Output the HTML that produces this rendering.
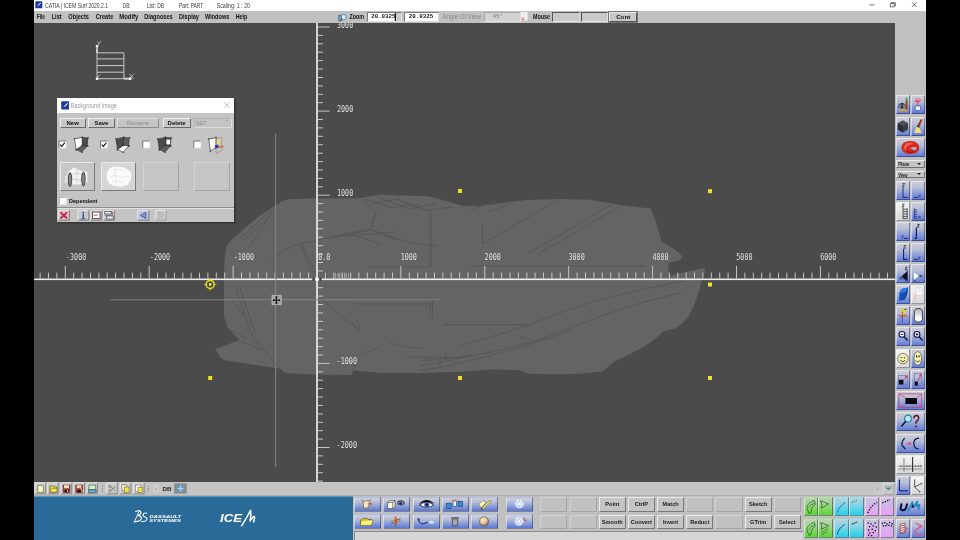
<!DOCTYPE html><html><head><meta charset="utf-8"><title>CATIA | ICEM Surf</title><style>
html,body{margin:0;padding:0;background:#000;}
body{width:960px;height:540px;overflow:hidden;position:relative;font-family:"Liberation Sans",sans-serif;}
.a{position:absolute;}
svg text{font-family:"Liberation Sans",sans-serif;}
.mono text{font-family:"DejaVu Sans Mono","Liberation Mono",monospace;}
#win{will-change:transform;position:absolute;left:34px;top:0;width:892px;height:540px;background:#c0c0c0;overflow:hidden;}
#title{position:absolute;left:0;top:0;width:892px;height:11px;background:#fff;}
#title span{position:absolute;top:1.5px;font-size:6px;line-height:8px;color:#222;white-space:nowrap;}
#menu{position:absolute;left:0;top:11px;width:892px;height:12px;background:#c1c1c1;}
#menu span.m{position:absolute;top:2px;font-size:6.4px;line-height:8px;font-weight:bold;color:#111;white-space:nowrap;}
#vp{position:absolute;left:0;top:23px;width:861px;height:459px;background:#4b4b4b;overflow:hidden;}
#rt{position:absolute;left:861px;top:23px;width:31px;height:517px;background:#c0c0c0;}
.tb{position:absolute;box-sizing:border-box;border-top:1px solid rgba(255,255,255,0.5);border-left:1px solid rgba(255,255,255,0.5);border-bottom:1px solid rgba(20,20,60,0.42);border-right:1px solid rgba(20,20,60,0.42);background:linear-gradient(#cfcfd6 0%,#b9bfd6 35%,#7f93d6 75%,#5d79d3 100%);background-origin:border-box;overflow:hidden;}
.tb.lt{background:linear-gradient(#f4f4f4,#d8d8d8);}
.tb svg{position:absolute;left:0;top:0;}
.dd{position:absolute;box-sizing:border-box;background:#c4c4c4;border-top:1px solid #ececec;border-left:1px solid #ececec;border-bottom:1px solid #707070;border-right:1px solid #707070;}
.dd span{position:absolute;left:1.5px;top:-0.6px;font-size:5.4px;line-height:6px;font-weight:bold;color:#222;}
.dd i{position:absolute;right:2.2px;top:1.6px;width:0;height:0;border-left:2px solid transparent;border-right:2px solid transparent;border-top:2.6px solid #222;}

.tb.bb{background:linear-gradient(#d0d0d8 0%,#b8c0d8 30%,#7c92d6 75%,#5a78d4 100%);}
.tb.kg{background:linear-gradient(#bcd2b4 0%,#9ed48a 40%,#5cd62c 100%);}
.tb.kc{background:linear-gradient(#b4d4dc 0%,#84d4e4 40%,#22d2ea 100%);}
.tb.kp{background:linear-gradient(#c8c4de 0%,#d4b4e8 45%,#eaa0f2 100%);}
.gb{position:absolute;box-sizing:border-box;background:#c4c4c4;border-top:1px solid #ececec;border-left:1px solid #ececec;border-bottom:1px solid #787878;border-right:1px solid #787878;text-align:center;}
.gb.e{background:#c1c1c1;border-top-color:#d2d2d2;border-left-color:#d2d2d2;border-bottom-color:#a6a6a6;border-right-color:#a6a6a6;}
.gb span{display:block;font-size:5.6px;line-height:12px;font-weight:bold;color:#1a1a1a;white-space:nowrap;}

#dlg{position:absolute;background:#c4c4c4;box-shadow:1px 1px 2px rgba(0,0,0,0.45);}
#dlg .dt{position:absolute;left:0;top:0;width:100%;height:14.4px;background:#fff;}
#dlg .dt span{position:absolute;left:14px;top:3.2px;font-size:6px;line-height:8px;color:#8c8c98;white-space:nowrap;}
.db{position:absolute;box-sizing:border-box;background:#c8c8c8;border-top:1px solid #f0f0f0;border-left:1px solid #f0f0f0;border-bottom:1px solid #6a6a6a;border-right:1px solid #6a6a6a;}
.db span{display:block;text-align:center;font-size:6px;line-height:8px;font-weight:bold;color:#111;white-space:nowrap;}
.db.dis span{color:#8e8e8e;font-weight:normal;}
.db.dis{border-bottom-color:#8a8a8a;border-right-color:#8a8a8a;border-top-color:#dedede;border-left-color:#dedede;background:#c4c4c4;}
.db.sel{border-top-color:#b4b4b4;border-left-color:#b4b4b4;border-bottom-color:#dcdcdc;border-right-color:#dcdcdc;}
.db.sel i{position:absolute;right:2.4px;top:1.6px;width:0;height:0;border-left:1.6px solid transparent;border-right:1.6px solid transparent;border-top:2.4px solid #9a9a9a;}
.th{position:absolute;box-sizing:border-box;background:#c6c6c6;border-top:1px solid #e8e8e8;border-left:1px solid #e8e8e8;border-bottom:1px solid #7a7a7a;border-right:1px solid #7a7a7a;overflow:hidden;}
.th.lt2{background:#d6d6d6;}
.th.em{background:#c5c5c5;border-top-color:#d4d4d4;border-left-color:#d4d4d4;border-bottom-color:#a4a4a4;border-right-color:#a4a4a4;}
.th svg{position:absolute;left:0;top:0;}
.dep{position:absolute;font-size:6px;line-height:8px;font-weight:bold;color:#111;white-space:nowrap;}

.inp{position:absolute;top:1.2px;height:9.4px;box-sizing:border-box;background:#fff;border:1px solid #7a7a7a;border-right-color:#e0e0e0;border-bottom-color:#e0e0e0;overflow:hidden;}
.inp span{position:absolute;left:3.6px;top:0.2px;font-family:"Liberation Mono",monospace;font-size:5.8px;line-height:7px;font-weight:bold;color:#111;white-space:nowrap;}
.inp u{position:absolute;left:27px;top:0;width:0.8px;height:8px;background:#111;}
.inp.g{background:#d2d2d2;border-color:#a8a8a8;border-right-color:#e4e4e4;border-bottom-color:#e4e4e4;}
.inp.g2{background:#c9c9c9;border-color:#555;border-right-color:#e4e4e4;border-bottom-color:#e4e4e4;}
.inp.bt{background:#c8c8c8;border-color:#e8e8e8;border-right-color:#555;border-bottom-color:#555;outline:0.5px solid #777;}
</style></head><body>
<div id="win">
<div id="title">
<svg class="a" style="left:1.3px;top:1.3px" width="7.6" height="7.6" viewBox="0 0 9 9"><rect x="0.3" y="0.3" width="8.4" height="8.4" rx="1" fill="#1c3a9a"/><path d="M1.5 7.5 C3 6 4 3 7.5 1.5 C6.5 3.5 5 5 3 6 Z" fill="#fff"/></svg>
<svg class="a" style="left:0;top:0" width="892" height="11" viewBox="34 0 892 11" font-family="'Liberation Sans',sans-serif">
<text x="45" y="7.9" font-size="6.4" font-weight="normal" fill="#3c3c3c" textLength="63.2" lengthAdjust="spacingAndGlyphs">CATIA | ICEM Surf 2020.2.1</text>
<text x="122.7" y="7.9" font-size="6.4" font-weight="normal" fill="#3c3c3c" textLength="8.0" lengthAdjust="spacingAndGlyphs">DB:</text>
<text x="146.7" y="7.9" font-size="6.4" font-weight="normal" fill="#3c3c3c" textLength="17.3" lengthAdjust="spacingAndGlyphs">List: DB</text>
<text x="179" y="7.9" font-size="6.4" font-weight="normal" fill="#3c3c3c" textLength="24.3" lengthAdjust="spacingAndGlyphs">Part: PART</text>
<text x="216.7" y="7.9" font-size="6.4" font-weight="normal" fill="#3c3c3c" textLength="33.3" lengthAdjust="spacingAndGlyphs">Scaling: 1 : 20</text>
</svg>
<svg class="a" style="left:820px;top:0" width="72" height="11" viewBox="0 0 72 11"><g stroke="#333" stroke-width="0.7" fill="none"><path d="M15.6 4.9h4.7"/><path d="M36.3 3.6h3.9v3.3h-3.9z M37.4 3.6v-1h3.9v3.3h-1.1"/><path d="M58.1 2.5l4.5 4.5M62.6 2.5l-4.5 4.5"/></g></svg>
</div>
<div id="menu">
<svg class="a" style="left:0;top:0" width="892" height="12" viewBox="34 11 892 12" font-family="'Liberation Sans',sans-serif">
<text x="36.7" y="18.7" font-size="6.4" font-weight="bold" fill="#111" textLength="8.3" lengthAdjust="spacingAndGlyphs">File</text>
<text x="51.7" y="18.7" font-size="6.4" font-weight="bold" fill="#111" textLength="10.0" lengthAdjust="spacingAndGlyphs">List</text>
<text x="68.3" y="18.7" font-size="6.4" font-weight="bold" fill="#111" textLength="20.7" lengthAdjust="spacingAndGlyphs">Objects</text>
<text x="95.7" y="18.7" font-size="6.4" font-weight="bold" fill="#111" textLength="17.6" lengthAdjust="spacingAndGlyphs">Create</text>
<text x="119.3" y="18.7" font-size="6.4" font-weight="bold" fill="#111" textLength="19.0" lengthAdjust="spacingAndGlyphs">Modify</text>
<text x="144.3" y="18.7" font-size="6.4" font-weight="bold" fill="#111" textLength="28.4" lengthAdjust="spacingAndGlyphs">Diagnoses</text>
<text x="179" y="18.7" font-size="6.4" font-weight="bold" fill="#111" textLength="20.0" lengthAdjust="spacingAndGlyphs">Display</text>
<text x="205" y="18.7" font-size="6.4" font-weight="bold" fill="#111" textLength="24.3" lengthAdjust="spacingAndGlyphs">Windows</text>
<text x="235.7" y="18.7" font-size="6.4" font-weight="bold" fill="#111" textLength="11.6" lengthAdjust="spacingAndGlyphs">Help</text>
<text x="349.4" y="18.7" font-size="6.4" font-weight="bold" fill="#111" textLength="14.6" lengthAdjust="spacingAndGlyphs">Zoom</text>
<text x="533" y="18.7" font-size="6.4" font-weight="bold" fill="#111" textLength="17.0" lengthAdjust="spacingAndGlyphs">Mouse</text>
<text x="442.6" y="18.7" font-size="6.4" font-weight="normal" fill="#8a8a8a" textLength="38.2" lengthAdjust="spacingAndGlyphs">Angle Of View</text>
</svg>
<svg class="a" style="left:304px;top:1.5px" width="9" height="9" viewBox="0 0 9 9"><circle cx="5.6" cy="4" r="2.6" fill="#dfeef8" stroke="#4a7a9a" stroke-width="0.8"/><rect x="0.8" y="2.2" width="2.4" height="5.6" fill="#6aa0c8" stroke="#2a4a6a" stroke-width="0.5"/><path d="M4 6.2L2.6 8.4" stroke="#444" stroke-width="0.9"/></svg>
<div class="inp" style="left:332.6px;width:35px"><b style="position:absolute;right:0;top:0;width:6.2px;height:100%;background:#cbcbcb"></b><span>20.9325</span><u></u></div>
<div class="inp" style="left:370.2px;width:34.4px"><span>20.9325</span></div>
<div class="inp g" style="left:449.6px;width:37px"><span style="color:#8e8e8e;left:8px">45&deg;</span></div>
<svg class="a" style="left:486.6px;top:1.2px" width="7" height="9" viewBox="0 0 7 9"><rect x="0" y="0" width="6.6" height="8.6" fill="#f0f0f0"/><path d="M1.2 5.4v2.4h1.6V5.4" stroke="#d03020" stroke-width="0.6" fill="none"/></svg>
<div class="inp g2" style="left:518px;width:27.8px"></div>
<div class="inp g2" style="left:546.8px;width:27.4px"></div>
<div class="inp bt" style="left:575.2px;width:28px"><span style="left:0;width:100%;text-align:center;font-family:'Liberation Sans',sans-serif;font-weight:bold;font-size:6.2px">Cont</span></div>
</div>
<div id="vp"><svg class="a" style="left:0;top:0" width="861" height="459" viewBox="34 23 861 459" font-family="'Liberation Mono',monospace">
<polygon fill="#646464" points="224,279 224.4,261.4 226,247.2 230.5,241 243.8,228.9 261,214.6 269.2,209.5 282.5,200.8 289.6,199.3 316,198.3 354.8,198.3 362,197.8 380,194.6 400.4,195.5 426.8,196 441,199.5 461.5,205.6 477.7,206.2 502.2,203 526.6,200.1 560,199 590.5,199.8 621,205.3 650.6,208.6 655.2,219.5 661.8,242 674,249 681.2,255.2 682.2,258.2 679,260.3 669,262.9 668,267.4 670,275.5 705.6,267.4 702.5,279.6 701.5,281 699.5,290.2 694.4,304.4 688.3,316.7 682.2,323.8 676,327.9 661.8,332 659.8,335 649.6,343.1 637.4,350.3 623.1,357.4 613,362.5 602.8,371.6 580.4,373.7 560,374.3 528.6,373.7 518.5,370.3 494,369.6 461.4,371.7 420.7,372.9 380,372.9 353.7,370.4 351.7,375.1 316,374.5 285.5,373.1 279.4,368.4 250.9,364.3 224.4,360.3 220.4,357.2 215.3,349 239.7,339.9 227.5,327.7 224,316.5"/>
<g id="sketch" fill="none" stroke="#545454" stroke-width="0.85"><path d="M240.6 238L273 208.5M244 240L275 211M248.8 247.7L270.4 215M270 261Q284 248 300 243.7L316.5 241M300 245L313.8 274.8M302 244.6L316 273"/>
<path d="M362.5 199L376 212.5L370.6 228.8L319 239.6M376 212.5L372 226M330 238L372 230L410 243L436 246M345 236L395 232M372 230L396 240M352 234L380 244"/>
<path d="M366 199.4L392 207.6L418 204.4M380 198L410 209L436 203M398 200L426 210.6L452 207M372 203L400 199"/>
<path d="M430 210V266.7M368 266.7H430M431 211V266M428.4 264l1.6 2.6 1.6-2.6" stroke-width="0.6"/>
<path d="M482.5 244L557.5 200M528 253.4L610.6 205M538.75 253.4L620 206.6M482.5 223.8V244M470 266H645M462 207L480 203M470 210L496 201M488 212L512 203"/>
<path d="M682.5 281Q640 289 595 301Q560 312 529 324.7Q490 338 460.6 345M682.5 292.5Q640 302 607.5 313.8Q570 328 538.8 340Q510 348 488.8 352.8Q450 359 420 360.6"/>
<path d="M443.4 324.7H526M420 370.6Q452 366 482.5 357.5Q530 346 573 329.4M420 299.7H432.5V318.4M420 366Q445 362 470 356M446 352v8M488 348v5M520 338.6l4-1.6 8 3.4"/>
<path d="M319 294.4Q328 306 341 316Q352 324 360 331M352 322l8 9-2-10M235 286L251.5 335L278.6 367.5M240 288L255 333M232 300L246 318M354.5 303.9H430.4V318.8"/>
<path d="M362.6 354L378.9 347.2M389.7 343Q405 348 422 348.6M406 356.7L460 358M440 360v8M356 364l-4 8M240.6 341L262 350M227 328L246 338"/></g>
<g fill="#ececec">
<rect x="34" y="278.50" width="861" height="1.6"/>
<rect x="316.15" y="23" width="1.7" height="459"/>
</g>
<g stroke="#d8d8d8" stroke-width="0.85">
<path d="M40.1 278.5v-5.9M48.5 278.5v-5.9M56.9 278.5v-5.9M65.3 278.5v-12.6M73.7 278.5v-5.9M82.1 278.5v-5.9M90.5 278.5v-5.9M98.9 278.5v-5.9M107.2 278.5v-5.9M115.6 278.5v-5.9M124.0 278.5v-5.9M132.4 278.5v-5.9M140.8 278.5v-5.9M149.2 278.5v-12.6M157.6 278.5v-5.9M166.0 278.5v-5.9M174.4 278.5v-5.9M182.8 278.5v-5.9M191.1 278.5v-5.9M199.5 278.5v-5.9M207.9 278.5v-5.9M216.3 278.5v-5.9M224.7 278.5v-5.9M233.1 278.5v-12.6M241.5 278.5v-5.9M249.9 278.5v-5.9M258.3 278.5v-5.9M266.7 278.5v-5.9M275.1 278.5v-5.9M283.4 278.5v-5.9M291.8 278.5v-5.9M300.2 278.5v-5.9M308.6 278.5v-5.9M325.4 278.5v-5.9M333.8 278.5v-5.9M342.2 278.5v-5.9M350.6 278.5v-5.9M358.9 278.5v-5.9M367.3 278.5v-5.9M375.7 278.5v-5.9M384.1 278.5v-5.9M392.5 278.5v-5.9M400.9 278.5v-12.6M409.3 278.5v-5.9M417.7 278.5v-5.9M426.1 278.5v-5.9M434.5 278.5v-5.9M442.9 278.5v-5.9M451.2 278.5v-5.9M459.6 278.5v-5.9M468.0 278.5v-5.9M476.4 278.5v-5.9M484.8 278.5v-12.6M493.2 278.5v-5.9M501.6 278.5v-5.9M510.0 278.5v-5.9M518.4 278.5v-5.9M526.8 278.5v-5.9M535.1 278.5v-5.9M543.5 278.5v-5.9M551.9 278.5v-5.9M560.3 278.5v-5.9M568.7 278.5v-12.6M577.1 278.5v-5.9M585.5 278.5v-5.9M593.9 278.5v-5.9M602.3 278.5v-5.9M610.7 278.5v-5.9M619.0 278.5v-5.9M627.4 278.5v-5.9M635.8 278.5v-5.9M644.2 278.5v-5.9M652.6 278.5v-12.6M661.0 278.5v-5.9M669.4 278.5v-5.9M677.8 278.5v-5.9M686.2 278.5v-5.9M694.5 278.5v-5.9M702.9 278.5v-5.9M711.3 278.5v-5.9M719.7 278.5v-5.9M728.1 278.5v-5.9M736.5 278.5v-12.6M744.9 278.5v-5.9M753.3 278.5v-5.9M761.7 278.5v-5.9M770.1 278.5v-5.9M778.5 278.5v-5.9M786.8 278.5v-5.9M795.2 278.5v-5.9M803.6 278.5v-5.9M812.0 278.5v-5.9M820.4 278.5v-12.6M828.8 278.5v-5.9M837.2 278.5v-5.9M845.6 278.5v-5.9M854.0 278.5v-5.9M862.4 278.5v-5.9M870.7 278.5v-5.9M879.1 278.5v-5.9M887.5 278.5v-5.9"/>
<path d="M317.8 481.1h5.2M317.8 472.7h5.2M317.8 464.3h5.2M317.8 455.9h5.2M317.8 447.5h11.8M317.8 439.1h5.2M317.8 430.7h5.2M317.8 422.3h5.2M317.8 413.9h5.2M317.8 405.4h5.2M317.8 397.0h5.2M317.8 388.6h5.2M317.8 380.2h5.2M317.8 371.8h5.2M317.8 363.4h11.8M317.8 355.0h5.2M317.8 346.6h5.2M317.8 338.2h5.2M317.8 329.8h5.2M317.8 321.4h5.2M317.8 312.9h5.2M317.8 304.5h5.2M317.8 296.1h5.2M317.8 287.7h5.2M317.8 270.9h5.2M317.8 262.5h5.2M317.8 254.1h5.2M317.8 245.7h5.2M317.8 237.2h5.2M317.8 228.8h5.2M317.8 220.4h5.2M317.8 212.0h5.2M317.8 203.6h5.2M317.8 195.2h11.8M317.8 186.8h5.2M317.8 178.4h5.2M317.8 170.0h5.2M317.8 161.6h5.2M317.8 153.2h5.2M317.8 144.7h5.2M317.8 136.3h5.2M317.8 127.9h5.2M317.8 119.5h5.2M317.8 111.1h11.8M317.8 102.7h5.2M317.8 94.3h5.2M317.8 85.9h5.2M317.8 77.5h5.2M317.8 69.1h5.2M317.8 60.6h5.2M317.8 52.2h5.2M317.8 43.8h5.2M317.8 35.4h5.2M317.8 27.0h11.8"/>
</g>
<g class="mono" fill="#e0e0e0" font-size="8.1">
<text x="65.9" y="260.0" textLength="20.4" lengthAdjust="spacingAndGlyphs">-3000</text>
<text x="149.8" y="260.0" textLength="20.4" lengthAdjust="spacingAndGlyphs">-2000</text>
<text x="233.7" y="260.0" textLength="20.4" lengthAdjust="spacingAndGlyphs">-1000</text>
<text x="400.7" y="260.0" textLength="16.2" lengthAdjust="spacingAndGlyphs">1000</text>
<text x="484.6" y="260.0" textLength="16.2" lengthAdjust="spacingAndGlyphs">2000</text>
<text x="568.5" y="260.0" textLength="16.2" lengthAdjust="spacingAndGlyphs">3000</text>
<text x="652.4" y="260.0" textLength="16.2" lengthAdjust="spacingAndGlyphs">4000</text>
<text x="736.3" y="260.0" textLength="16.2" lengthAdjust="spacingAndGlyphs">5000</text>
<text x="820.2" y="260.0" textLength="16.2" lengthAdjust="spacingAndGlyphs">6000</text>
<text x="318.2" y="260.0" textLength="12.1" lengthAdjust="spacingAndGlyphs">0.0</text>
<text x="337.0" y="27.5" textLength="16.2" lengthAdjust="spacingAndGlyphs">3000</text>
<text x="337.0" y="111.6" textLength="16.2" lengthAdjust="spacingAndGlyphs">2000</text>
<text x="337.0" y="195.7" textLength="16.2" lengthAdjust="spacingAndGlyphs">1000</text>
<text x="336.6" y="363.9" textLength="20.4" lengthAdjust="spacingAndGlyphs">-1000</text>
<text x="336.6" y="448.0" textLength="20.4" lengthAdjust="spacingAndGlyphs">-2000</text>
<text x="334" y="278.3" font-size="7" fill="#cfcfcf" textLength="16.4" lengthAdjust="spacingAndGlyphs">|0|0|</text>
</g>
<rect x="312.4" y="277.90000000000003" width="2.4" height="2.8" fill="#3c3c3c"/><rect x="319.2" y="277.90000000000003" width="2.4" height="2.8" fill="#3c3c3c"/><rect x="315.4" y="277.7" width="3.2" height="3.2" fill="#fff"/>
<g stroke="#d8d8d8" stroke-width="0.9" fill="none">
<path d="M97 46V78.7H130 M97 52.8H123.9V78.7 M97 58.9H123.9 M97 65.6H123.9 M97 72.2H123.9"/>
<path d="M97 48.6V52.8 M124 78.7H130" stroke-width="1.8"/>
<path d="M97.5 41.5l1.6 2.2 2-2.6 M99.1 43.7l-1.4 2" stroke-width="0.7"/>
<path d="M129.5 74l4 4.6 M133.7 74l-4.4 4.6" stroke-width="0.7"/>
<path d="M97.5 77.5l2.5-3" stroke-width="0.7"/>
</g>
<g fill="#fff"><rect x="95.8" y="45" width="2.4" height="2.4"/><rect x="95.8" y="77.5" width="2.4" height="2.4"/><rect x="129" y="77.5" width="2.4" height="2.4"/></g>
<g stroke="#848484" stroke-width="1"><path d="M275.7 133.4V467 M110.4 299.8H441"/></g>
<rect x="272" y="295.3" width="9.2" height="9.4" fill="#a2a2a2" stroke="#c2c2c2" stroke-width="0.7"/><path d="M276.4 296.6v7M273.2 300.2h6.4" stroke="#0a0a0a" stroke-width="1" fill="none"/><path d="M276.4 295.8l-1.3 1.7h2.6zM276.4 304.4l-1.3-1.7h2.6zM272.6 300.2l1.5-1.2v2.4zM280.4 300.2l-1.5-1.2v2.4z" fill="#0a0a0a"/>
<g stroke="#e6dc14" fill="none"><circle cx="210.2" cy="284.4" r="4" stroke-width="1.6"/><path d="M204 284.4h2M214.4 284.4h2M210.2 278.2v2M210.2 288.6v2" stroke-width="0.8"/></g><rect x="209" y="283.2" width="2.4" height="2.4" fill="#f4ee60"/>
<g fill="#f0e020">
<rect x="458" y="189" width="4" height="4"/>
<rect x="708" y="189.2" width="4" height="4"/>
<rect x="708" y="282.5" width="4" height="4"/>
<rect x="208.2" y="376" width="4" height="4"/>
<rect x="458" y="376" width="4" height="4"/>
<rect x="708" y="376" width="4" height="4"/>
</g>
</svg></div>
<div id="rt"><div class="tb " style="left:1.2px;top:72.0px;width:13.9px;height:19.0px"><svg width="11.9" height="17.0" viewBox="0 0 11.9 17.0"><path d="M1.2 10.8Q5 6.8 9 10.8Q5 13.6 1.2 10.8Z" fill="#fff" stroke="#111" stroke-width="0.7"/><circle cx="5" cy="10.6" r="1.6" fill="#234"/><path d="M1 9.6Q5 4.6 9.2 9.6Q5 6.8 1 9.6Z" fill="#111"/><rect x="8.6" y="5" width="2" height="9" fill="#9a4418"/><path d="M8.6 5.2l0.4-3.6h1.2l0.4 3.6z" fill="#3a9a30"/><rect x="1.2" y="13.6" width="9.4" height="1.6" fill="#d8b020"/></svg></div>
<div class="tb " style="left:16.3px;top:72.0px;width:13.3px;height:19.0px"><svg width="11.3" height="17.0" viewBox="0 0 11.3 17.0"><path d="M3.2 3.2Q5.8 0.8 8.6 3.2Q9.6 5.6 6.6 6.6L6.3 10H5.2L5 6.6Q2 5.8 3.2 3.2Z" fill="#e0607a"/><path d="M4 3.6Q5.8 2.4 7.8 3.8" stroke="#fff" stroke-width="0.6" fill="none"/><rect x="3.2" y="10" width="5.4" height="4.6" rx="0.8" fill="#f4f4f8" stroke="#2848a8" stroke-width="0.7"/></svg></div>
<div class="tb " style="left:1.2px;top:93.7px;width:13.9px;height:19.0px"><svg width="11.9" height="17.0" viewBox="0 0 11.9 17.0"><path d="M5.8 2.6L11 5.2V11.4L5.8 14.4L0.8 11.4V5.2Z" fill="#3a3d40"/><path d="M5.8 2.6L11 5.2L5.8 8L0.8 5.2Z" fill="#505458"/><path d="M5.8 8V14.4L0.8 11.4V5.2Z" fill="#2a2c2e"/></svg></div>
<div class="tb " style="left:16.3px;top:93.7px;width:13.3px;height:19.0px"><svg width="11.3" height="17.0" viewBox="0 0 11.3 17.0"><path d="M8.8 1.2L10.2 1.8L7.2 9.2L5 8.4Z" fill="#8a2a1c"/><path d="M9.4 1.4L10.2 1.8L7.6 8" stroke="#d85a3c" stroke-width="0.6" fill="none"/><path d="M4.8 8.2L7.4 9.4L9.6 15H2.2Z" fill="#f0e070"/><path d="M4.8 8.2L7.4 9.4" stroke="#222" stroke-width="0.9"/></svg></div>
<div class="tb " style="left:1.2px;top:115.2px;width:28.4px;height:19.0px"><svg width="26.4" height="17.0" viewBox="0 0 26.4 17.0"><path d="M4.4 8.5Q4.4 3.2 11 2.2Q18 1.2 21 5Q23.4 8 21.4 11.8Q18.6 15.4 12 15Q4.8 14.4 4.4 8.5Z" fill="#d62a20"/><path d="M7 8Q7.5 4.5 12 3.8Q15 3.4 16.5 5Q12 5 10 7.5Q8.5 9.5 9 12Q7 11 7 8Z" fill="#f0625a"/><path d="M13 9.5Q16 7 20 8.4Q19.5 10.5 17.5 11.4Q15 10 13 9.5Z" fill="#b8b0c8"/><path d="M9.5 12.5Q13 14.5 18 12.6" stroke="#8c1410" stroke-width="0.9" fill="none"/></svg></div>
<div class="tb " style="left:1.2px;top:158.0px;width:13.9px;height:19.0px"><svg width="11.9" height="17.0" viewBox="0 0 11.9 17.0"><path d="M5.4 1.6h2.2l-2.2 2.6h2.2" stroke="#111" stroke-width="0.7" fill="none"/><path d="M6 5V15.4H10.6" stroke="#16226e" stroke-width="0.9" fill="none"/></svg></div>
<div class="tb " style="left:16.3px;top:158.0px;width:13.3px;height:19.0px"><svg width="11.3" height="17.0" viewBox="0 0 11.3 17.0"><path d="M2 15.4H6" stroke="#16226e" stroke-width="0.9"/><path d="M6.6 12.6l2.2 2.6M8.8 12.6l-2.2 2.6" stroke="#1a2a90" stroke-width="0.7" fill="none"/></svg></div>
<div class="tb lt" style="left:1.2px;top:178.6px;width:13.9px;height:19.0px"><svg width="11.9" height="17.0" viewBox="0 0 11.9 17.0"><path d="M5 1.2h2.2l-2.2 2.6h2.2" stroke="#111" stroke-width="0.7" fill="none"/><path d="M6 4.6V15.8M10.2 5.2V15.8M6 6.2h4.2M6 8.6h4.2M6 11h4.2M6 13.4h4.2M6 15.6h4.2" stroke="#222" stroke-width="0.7" fill="none"/></svg></div>
<div class="tb " style="left:16.3px;top:178.6px;width:13.3px;height:19.0px"><svg width="11.3" height="17.0" viewBox="0 0 11.3 17.0"><path d="M2.4 5.4V15.4M2.4 7h2.6M2.4 9.2h2.6M2.4 11.4h2.6M2.4 13.4h2.6M2.4 15.4h3" stroke="#16226e" stroke-width="0.7" fill="none"/><path d="M6.4 13l2.2 2.6M8.600000000000001 13l-2.2 2.6" stroke="#1a2a90" stroke-width="0.7" fill="none"/></svg></div>
<div class="tb " style="left:1.2px;top:199.1px;width:13.9px;height:19.0px"><svg width="11.9" height="17.0" viewBox="0 0 11.9 17.0"><path d="M4.4 12.4l1.1 1.3l1.1-1.3M5.5 13.700000000000001v1.4" stroke="#16226e" stroke-width="0.7" fill="none"/><path d="M6.8 15.4H11" stroke="#16226e" stroke-width="0.9"/></svg></div>
<div class="tb " style="left:16.3px;top:199.1px;width:13.3px;height:19.0px"><svg width="11.3" height="17.0" viewBox="0 0 11.3 17.0"><path d="M5.2 1.4h2.2l-2.2 2.6h2.2" stroke="#111" stroke-width="0.7" fill="none"/><path d="M4.4 4.6V15.4H2.4" stroke="#16226e" stroke-width="1.3" fill="none"/></svg></div>
<div class="tb " style="left:1.2px;top:220.0px;width:13.9px;height:19.0px"><svg width="11.9" height="17.0" viewBox="0 0 11.9 17.0"><path d="M6.6 1.6h2.2l-2.2 2.6h2.2" stroke="#111" stroke-width="0.7" fill="none"/><path d="M6.6 5V15.4H10.4" stroke="#16226e" stroke-width="1.1" fill="none"/></svg></div>
<div class="tb " style="left:16.3px;top:220.0px;width:13.3px;height:19.0px"><svg width="11.3" height="17.0" viewBox="0 0 11.3 17.0"><path d="M2 15.4H6" stroke="#16226e" stroke-width="0.9"/><path d="M6.4 12.6l1.1 1.3l1.1-1.3M7.5 13.9v1.4" stroke="#16226e" stroke-width="0.7" fill="none"/></svg></div>
<div class="tb " style="left:1.2px;top:241.0px;width:13.9px;height:19.0px"><svg width="11.9" height="17.0" viewBox="0 0 11.9 17.0"><path d="M8 2.2h2.2l-2.2 2.6h2.2" stroke="#111" stroke-width="0.7" fill="none"/><path d="M2.6 12.2l1.1 1.3l1.1-1.3M3.7 13.5v1.4" stroke="#16226e" stroke-width="0.7" fill="none"/><path d="M10.4 6V16L4.4 11.6Z" fill="#111"/><path d="M10.4 4.6V16.4M3.4 12.4l7 4" stroke="#16226e" stroke-width="0.6" fill="none"/></svg></div>
<div class="tb " style="left:16.3px;top:241.0px;width:13.3px;height:19.0px"><svg width="11.3" height="17.0" viewBox="0 0 11.3 17.0"><path d="M8.2 10l2.2 2.6M10.399999999999999 10l-2.2 2.6" stroke="#1a2a90" stroke-width="0.7" fill="none"/><path d="M1.8 7.4V15L6.8 11Z" fill="#fff"/><path d="M2 14.6l1.2 2M6.8 11h2" stroke="#111" stroke-width="0.7" fill="none"/></svg></div>
<div class="tb " style="left:1.2px;top:262.0px;width:13.9px;height:19.0px"><svg width="11.9" height="17.0" viewBox="0 0 11.9 17.0"><path d="M4.4 3L11.2 1.4L10 8.6L7.6 14L2 14.6L2.4 7.2Z" fill="#1450b8"/><path d="M4.4 3L11.2 1.4L9 6L2.4 7.2Z" fill="#2c78e4"/><path d="M9 6L11.2 1.4L10 8.6L7.6 14Z" fill="#0c3a90"/></svg></div>
<div class="tb lt" style="left:16.3px;top:262.0px;width:13.3px;height:19.0px"><svg width="11.3" height="17.0" viewBox="0 0 11.3 17.0"><path d="M4 1.6H10.4V9.6H4Z" fill="#f6f6f6" stroke="#c8c8c8" stroke-width="0.5"/><path d="M5.4 3.6h3.6M5.4 5.4h3.6" stroke="#d0d0d0" stroke-width="0.5"/><path d="M4.4 8.4L2.4 14.6" stroke="#e8b8b0" stroke-width="1.3"/><path d="M6.2 1.8l1.6 1.8" stroke="#c8c8d8" stroke-width="0.6"/></svg></div>
<div class="tb " style="left:1.2px;top:283.1px;width:13.9px;height:19.0px"><svg width="11.9" height="17.0" viewBox="0 0 11.9 17.0"><path d="M5.2 2.4L8.6 1.8L8.2 4.4L9.8 5L7.6 6.6L7.4 9.6L5 10.6L4.6 6.6L3.6 4.4Z" fill="#f0d820"/><path d="M5.4 4.4v11" stroke="#2838b8" stroke-width="0.7"/><path d="M1.4 8.4L10.6 9.4" stroke="#d02828" stroke-width="0.7"/><path d="M3 11.6L8.6 7.4" stroke="#d02828" stroke-width="0.7"/><path d="M7.4 2.4h2" stroke="#111" stroke-width="0.8"/></svg></div>
<div class="tb " style="left:16.3px;top:283.1px;width:13.3px;height:19.0px"><svg width="11.3" height="17.0" viewBox="0 0 11.3 17.0"><defs><linearGradient id="og" x1="0" y1="0" x2="0" y2="1"><stop offset="0" stop-color="#b0b0b0"/><stop offset="0.6" stop-color="#f4f4f4"/><stop offset="1" stop-color="#fff"/></linearGradient></defs><path d="M4.4 1.6H8.4L10.4 4V12.6L8.4 15H4.4L2.4 12.6V4Z" fill="url(#og)" stroke="#333" stroke-width="0.9"/></svg></div>
<div class="tb " style="left:1.2px;top:304.2px;width:13.9px;height:19.0px"><svg width="11.9" height="17.0" viewBox="0 0 11.9 17.0"><circle cx="5" cy="6.4" r="2.9" fill="#fff" stroke="#0e1440" stroke-width="1.1"/><path d="M7.2 8.8L10.6 12.6" stroke="#0e1440" stroke-width="1.5"/><path d="M3.6 6.4h2.8" stroke="#0e1440" stroke-width="0.9"/></svg></div>
<div class="tb " style="left:16.3px;top:304.2px;width:13.3px;height:19.0px"><svg width="11.3" height="17.0" viewBox="0 0 11.3 17.0"><circle cx="5" cy="6.4" r="2.9" fill="#fff" stroke="#0e1440" stroke-width="1.1"/><path d="M7.2 8.8L10.6 12.6" stroke="#0e1440" stroke-width="1.5"/><path d="M3.6 6.4h2.8 M5 5v2.8" stroke="#0e1440" stroke-width="0.9"/></svg></div>
<div class="tb lt" style="left:1.2px;top:326.1px;width:13.9px;height:19.0px"><svg width="11.9" height="17.0" viewBox="0 0 11.9 17.0"><circle cx="5.9" cy="8.6" r="5.2" fill="#f6f2b0" stroke="#333" stroke-width="0.6"/><circle cx="4.2" cy="7.6" r="0.7" fill="#111"/><circle cx="7.4" cy="7.6" r="0.7" fill="#111"/><path d="M3.4 10.4Q5.8 13 8.2 10.4" stroke="#111" stroke-width="0.8" fill="none"/></svg></div>
<div class="tb " style="left:16.3px;top:326.1px;width:13.3px;height:19.0px"><svg width="11.3" height="17.0" viewBox="0 0 11.3 17.0"><ellipse cx="5.8" cy="8.4" rx="3.8" ry="6.8" fill="#f6f2b0" stroke="#333" stroke-width="0.6"/><ellipse cx="4.6" cy="6.4" rx="0.6" ry="1.1" fill="#111"/><ellipse cx="7" cy="6.4" rx="0.6" ry="1.1" fill="#111"/><path d="M4 10.4Q5.8 13.6 7.6 10.4" stroke="#111" stroke-width="0.8" fill="none"/></svg></div>
<div class="tb " style="left:1.2px;top:347.4px;width:13.9px;height:19.0px"><svg width="11.9" height="17.0" viewBox="0 0 11.9 17.0"><rect x="1.6" y="4.4" width="8.8" height="9.2" fill="none" stroke="#6a70a8" stroke-width="0.6"/><rect x="1.8" y="8.8" width="4.6" height="4.6" fill="#0a0a12"/><path d="M6.4 8.8L10 5M10 5l-2 0.4M10 5l-0.4 2" stroke="#e02848" stroke-width="0.8" fill="none"/></svg></div>
<div class="tb " style="left:16.3px;top:347.4px;width:13.3px;height:19.0px"><svg width="11.3" height="17.0" viewBox="0 0 11.3 17.0"><rect x="2.6" y="2.6" width="6.8" height="12" fill="none" stroke="#6a70a8" stroke-width="0.6"/><rect x="2.8" y="10.6" width="3" height="4" fill="#0a0a12"/><path d="M5.8 10.4L9 3.4M9 3.4l-1.8 1.2M9 3.4l0.2 2.2" stroke="#e02848" stroke-width="0.8" fill="none"/></svg></div>
<div class="tb " style="left:1.2px;top:368.3px;width:28.4px;height:19.0px"><svg width="26.4" height="17.0" viewBox="0 0 26.4 17.0"><rect x="1.9" y="1.9" width="22.6" height="13.4" fill="none" stroke="#c83070" stroke-width="0.7"/><path d="M1.9 1.9L8.4 6M24.5 1.9L20 6M1.9 15.3L8.4 12M24.5 15.3L20 12" stroke="#e04888" stroke-width="0.8"/><rect x="8.4" y="6" width="11.6" height="6" fill="#08080c"/></svg></div>
<div class="tb " style="left:1.2px;top:389.2px;width:28.4px;height:19.0px"><svg width="26.4" height="17.0" viewBox="0 0 26.4 17.0"><circle cx="11" cy="5.6" r="3.4" fill="#bfe8f0" stroke="#1c8aa6" stroke-width="1.2"/><path d="M8.8 8.2L4.4 13.4" stroke="#14182c" stroke-width="1.6"/><path d="M16.6 5.4Q17 2.4 19.4 2.4Q22 2.6 21.6 5.4Q21.2 7.4 19 8.8V10.8" stroke="#5a1438" stroke-width="1.5" fill="none"/><circle cx="19" cy="13.6" r="1" fill="#5a1438"/></svg></div>
<div class="tb " style="left:1.2px;top:410.9px;width:28.4px;height:19.0px"><svg width="26.4" height="17.0" viewBox="0 0 26.4 17.0"><path d="M7.6 3Q3.6 8 5.4 11L8.4 14" stroke="#0c1244" stroke-width="1.2" fill="none"/><path d="M22 3.2Q16.4 3.4 16.8 9Q17.2 13.8 21.6 13.8" stroke="#0c1244" stroke-width="1.2" fill="none"/><path d="M9.6 8.6H14M14.2 8.6l-2-1.4v2.8z" stroke="#e8508c" stroke-width="1" fill="#e8508c"/></svg></div>
<div class="tb lt" style="left:1.2px;top:432.0px;width:28.4px;height:19.0px"><svg width="26.4" height="17.0" viewBox="0 0 26.4 17.0"><path d="M7 2V16M15.6 1V16M1.4 10.2H25M1.4 13H25" stroke="#555" stroke-width="0.6" fill="none"/><path d="M15.6 1V16" stroke="#111" stroke-width="0.8"/><path d="M4 9.4v1.4M10 9.4v1.4M12.8 9.4v1.4M18.6 9.4v1.4M21.6 9.4v1.4M24 9.4v1.4" stroke="#222" stroke-width="0.7"/><path d="M7 2V8" stroke="#aaa" stroke-width="0.7"/></svg></div>
<div class="tb " style="left:1.2px;top:453.1px;width:13.9px;height:19.0px"><svg width="11.9" height="17.0" viewBox="0 0 11.9 17.0"><path d="M2.4 3V13.8H10.2" stroke="#0c1480" stroke-width="1" fill="none"/><path d="M2.4 2l-0.9 1.8h1.8zM11 13.8l-1.6-0.9v1.8z" fill="#0c1480"/></svg></div>
<div class="tb lt" style="left:16.3px;top:453.1px;width:13.3px;height:19.0px"><svg width="11.3" height="17.0" viewBox="0 0 11.3 17.0"><path d="M2.6 2.4V10L9.6 6.6M2.6 10L7.8 14.8" stroke="#222" stroke-width="0.7" fill="none"/><circle cx="9.6" cy="6.6" r="0.6" fill="#222"/><circle cx="7.8" cy="14.8" r="0.6" fill="#222"/></svg></div>
<div class="tb " style="left:1.2px;top:474.4px;width:28.4px;height:19.0px"><svg width="26.4" height="17.0" viewBox="0 0 26.4 17.0"><path d="M4.6 5.4L3.6 10.2Q3.6 12.4 6 12.2Q8.6 12 9.2 9.4L10.2 5.4" stroke="#0a0e3c" stroke-width="2" fill="none"/><path d="M10.8 13.4L15.4 4.2L16.6 9.2L20.4 3.6L19.6 8.6L22.4 6.8L21.4 12.2" stroke="#1c8ccc" stroke-width="1.7" fill="none" stroke-linejoin="round"/><path d="M14 9.6l2-3.4 0.8 3.6" fill="#0a0e3c"/></svg></div>
<div class="tb " style="left:1.2px;top:495.8px;width:13.9px;height:19.0px"><svg width="11.9" height="17.0" viewBox="0 0 11.9 17.0"><path d="M3.2 4.4L8 3.4V12.6L3.2 13.8Z" fill="#fff" stroke="#333" stroke-width="0.6"/><path d="M3.4 6.2L8 5.2M3.4 8.4L8 7.4M3.4 10.6L8 9.6M3.4 12.6L8 11.6" stroke="#d02020" stroke-width="0.9"/><path d="M8 8.6h3M11 8.6l-1.4-1" stroke="#e04070" stroke-width="0.8" fill="none"/></svg></div>
<div class="tb " style="left:16.3px;top:495.8px;width:13.3px;height:19.0px"><svg width="11.3" height="17.0" viewBox="0 0 11.3 17.0"><path d="M3.6 3L9.6 6.2L6.4 7.4M9.8 6.4L5.4 8.6Q2.6 10.4 3.4 13Q4.6 15.4 8.4 14.4L10.6 13.4" stroke="#e05484" stroke-width="1.2" fill="none"/></svg></div>
<div class="dd" style="left:1.4px;top:137.2px;width:28.2px;height:7.8px"><svg class="a" style="left:0;top:0" width="20" height="6" viewBox="0 0 20 6"><text x="1.2" y="4.9" font-family="'Liberation Sans',sans-serif" font-size="5.6" font-weight="bold" fill="#222" textLength="11.2" lengthAdjust="spacingAndGlyphs">Plane</text></svg><i></i></div>
<div class="dd" style="left:1.4px;top:147.6px;width:28.2px;height:7.8px"><svg class="a" style="left:0;top:0" width="20" height="6" viewBox="0 0 20 6"><text x="1.2" y="4.9" font-family="'Liberation Sans',sans-serif" font-size="5.6" font-weight="bold" fill="#222" textLength="9.4" lengthAdjust="spacingAndGlyphs">View</text></svg><i></i></div></div>
<div class="a" style="left:0.0px;top:482.0px;width:861.0px;height:14.2px;background:#c4c4c4;border-bottom:1px solid #b0b0b0;box-sizing:border-box"></div>
<svg class="a" style="left:0;top:482px" width="861" height="15" viewBox="34 482 861 15">
<rect x="35" y="483" width="10.6" height="10.8" fill="#c8c8c8"/><path d="M35 493.8V483H45.6" stroke="#eee" stroke-width="0.8" fill="none"/><path d="M35 493.8H45.6V483" stroke="#777" stroke-width="0.8" fill="none"/>
<rect x="47.6" y="483" width="10.6" height="10.8" fill="#c8c8c8"/><path d="M47.6 493.8V483H58.2" stroke="#eee" stroke-width="0.8" fill="none"/><path d="M47.6 493.8H58.2V483" stroke="#777" stroke-width="0.8" fill="none"/>
<rect x="61.1" y="483" width="10.6" height="10.8" fill="#c8c8c8"/><path d="M61.1 493.8V483H71.7" stroke="#eee" stroke-width="0.8" fill="none"/><path d="M61.1 493.8H71.7V483" stroke="#777" stroke-width="0.8" fill="none"/>
<rect x="73.9" y="483" width="10.6" height="10.8" fill="#c8c8c8"/><path d="M73.9 493.8V483H84.5" stroke="#eee" stroke-width="0.8" fill="none"/><path d="M73.9 493.8H84.5V483" stroke="#777" stroke-width="0.8" fill="none"/>
<rect x="87" y="483" width="10.6" height="10.8" fill="#c8c8c8"/><path d="M87 493.8V483H97.6" stroke="#eee" stroke-width="0.8" fill="none"/><path d="M87 493.8H97.6V483" stroke="#777" stroke-width="0.8" fill="none"/>
<rect x="106.7" y="483" width="10.6" height="10.8" fill="#c8c8c8"/><path d="M106.7 493.8V483H117.3" stroke="#eee" stroke-width="0.8" fill="none"/><path d="M106.7 493.8H117.3V483" stroke="#777" stroke-width="0.8" fill="none"/>
<rect x="120.2" y="483" width="10.6" height="10.8" fill="#c8c8c8"/><path d="M120.2 493.8V483H130.8" stroke="#eee" stroke-width="0.8" fill="none"/><path d="M120.2 493.8H130.8V483" stroke="#777" stroke-width="0.8" fill="none"/>
<rect x="133.6" y="483" width="10.6" height="10.8" fill="#c8c8c8"/><path d="M133.6 493.8V483H144.2" stroke="#eee" stroke-width="0.8" fill="none"/><path d="M133.6 493.8H144.2V483" stroke="#777" stroke-width="0.8" fill="none"/>
<path d="M37.8 485.4H41.8L43.4 487V492.4H37.8Z" fill="#fbfac8" stroke="#55552a" stroke-width="0.6"/>
<path d="M49.8 486H52.8L53.6 487H56.8V492.2H49.8Z" fill="#e8dc30" stroke="#55500a" stroke-width="0.6"/><path d="M50 492L51.4 488.8H57.6L56.2 492Z" fill="#fbf26a" stroke="#55500a" stroke-width="0.5"/>
<rect x="63" y="485" width="7" height="7.4" fill="#a84444" stroke="#4a1818" stroke-width="0.5"/><rect x="64" y="485.2" width="5" height="3" fill="#f8e8b4"/><rect x="64.6" y="489.8" width="3.8" height="2.6" fill="#2a0c0c"/><rect x="66.8" y="490.2" width="1" height="2" fill="#e8d8d0"/>
<rect x="75.8" y="485" width="7" height="7.4" fill="#a84c48" stroke="#4a1818" stroke-width="0.5"/><rect x="76.8" y="485.2" width="4.6" height="2.8" fill="#f0d8b0"/><rect x="77.4" y="489.8" width="3.4" height="2.6" fill="#2a0c0c"/><path d="M79.6 486.2l3 5.6" stroke="#d8b088" stroke-width="1.1"/>
<rect x="89" y="485" width="6.8" height="4.4" fill="#d8f0b8" stroke="#30586a" stroke-width="0.6"/><rect x="88.6" y="489.8" width="7.6" height="2.8" fill="#4a9cc4" stroke="#2a4a5a" stroke-width="0.5"/><path d="M89.6 491.2h5.6" stroke="#a8dcec" stroke-width="0.5"/>
<rect x="101.8" y="485.6" width="1.2" height="1.2" fill="#888"/><rect x="101.8" y="488" width="1.2" height="1.2" fill="#888"/><rect x="101.8" y="490.4" width="1.2" height="1.2" fill="#888"/>
<rect x="147.6" y="485.6" width="1.2" height="1.2" fill="#888"/><rect x="147.6" y="488" width="1.2" height="1.2" fill="#888"/><rect x="147.6" y="490.4" width="1.2" height="1.2" fill="#888"/>
<g stroke="#6e6e6e" stroke-width="0.7" fill="none"><circle cx="109.8" cy="486.4" r="1.1"/><circle cx="109.8" cy="490.8" r="1.1"/><path d="M110.8 487l4.4 3.4M110.8 490.2l4.4-3.4"/></g>
<rect x="122" y="484.8" width="4.6" height="5.4" fill="#fbf8c8" stroke="#555" stroke-width="0.5"/><rect x="124.2" y="487" width="4.8" height="5.6" fill="#f4e43c" stroke="#555" stroke-width="0.5"/>
<rect x="135.4" y="485" width="5.4" height="6.6" fill="#fbfbe8" stroke="#666" stroke-width="0.5"/><rect x="138" y="487.4" width="4.6" height="5.2" fill="#f4e43c" stroke="#555" stroke-width="0.5"/>
<rect x="153" y="484.6" width="5.4" height="8.4" fill="#cfcfcf"/><path d="M154.4 488.8l2.6-2v4z" fill="#b4b4b4"/>
<rect x="174.2" y="483.4" width="12.6" height="10.2" fill="#8a8a8a"/><path d="M180.5 485v7M177 488.5h7" stroke="#58a8e0" stroke-width="2.6"/><path d="M180.5 485.6v5.8M177.6 488.5h5.8" stroke="#a8dcff" stroke-width="1"/>
<rect x="874" y="483.6" width="7" height="10.8" fill="#c9c9c9"/><path d="M876.4 486.4l2.8 2.4-2.8 2.4z" fill="#b2b2b2"/>
<rect x="883" y="483.6" width="10.8" height="10.8" fill="#c8c8c8"/><path d="M883 494.4V483.6H893.8" stroke="#e6e6e6" stroke-width="0.8" fill="none"/><path d="M883 494.4H893.8V483.6" stroke="#a0a0a0" stroke-width="0.8" fill="none"/><path d="M885 487h7" stroke="#5a8a98" stroke-width="0.8"/><path d="M885.4 488h6.2l-3.1 2.2z" fill="#5a8a98"/>
<text x="162.6" y="491" font-family="'Liberation Sans',sans-serif" font-size="6.2" font-weight="bold" fill="#222">DB</text>
</svg>
<div class="a" style="left:0.0px;top:496.2px;width:319.0px;height:43.8px;background:#2a6a98;border-top:1px solid #5e9abc;box-sizing:border-box"></div>
<svg class="a" style="left:95px;top:505px" width="135" height="26" viewBox="129 505 135 26">
<g fill="none" stroke="#fff" stroke-linecap="round"><path d="M135.6 511.4Q140.4 509.8 141 512.4Q141 514.4 137.8 515.6Q141.6 515.6 141.4 518.4Q140.6 521.8 134.2 521.6" stroke-width="1.1"/><path d="M146.8 513.2Q143.4 512.6 143 514.8Q143 516.6 145.4 517.2Q147.6 518 146.6 520Q145.4 521.8 141.6 521.4" stroke-width="1.1"/><path d="M134.4 522L139.4 510.4" stroke-width="0.9"/></g>
<text x="149.6" y="517.5" font-family="'Liberation Sans',sans-serif" font-size="4.3" font-weight="bold" font-style="italic" fill="#fff" textLength="31.6" lengthAdjust="spacingAndGlyphs">DASSAULT</text>
<text x="149.2" y="522.1" font-family="'Liberation Sans',sans-serif" font-size="4.3" font-weight="bold" font-style="italic" fill="#fff" textLength="31.6" lengthAdjust="spacingAndGlyphs">SYSTEMES</text>
<text x="220" y="522.4" font-family="'Liberation Sans',sans-serif" font-size="10" font-weight="bold" font-style="italic" fill="#fff" textLength="22" lengthAdjust="spacingAndGlyphs">ICE</text>
<path d="M241.6 525.8Q246.6 518 250.6 510.4Q251.4 516 250 521L252.8 517.4Q254.6 515.6 254.6 517.8L253.6 522" fill="none" stroke="#fff" stroke-width="1.5" stroke-linejoin="round" stroke-linecap="round"/>
</svg>
<div class="tb bb" style="left:320.2px;top:497.2px;width:26.6px;height:14.5px;"><svg width="24.6" height="12.5" viewBox="0 0 24.6 12.5"><path d="M8 3.4L14.4 2.6L13.6 9.6L8.8 10.4Z" fill="#f8e8b8" stroke="#6a4a20" stroke-width="0.6"/><path d="M6.4 1.6l1.6 1.8M14.4 2.6l1.6-1.2" stroke="#333" stroke-width="0.6"/><path d="M12.6 5.8h4.4M17 5.8l-1.4-1M17 5.8l-1.4 1" stroke="#e03030" stroke-width="0.7" fill="none"/></svg></div>
<div class="tb bb" style="left:349.3px;top:497.2px;width:26.9px;height:14.5px;"><svg width="24.9" height="12.5" viewBox="0 0 24.9 12.5"><path d="M3.6 4.4L6 2.6H11V8.4L8.8 10.6H3.6Z" fill="#fffbe0" stroke="#333" stroke-width="0.6"/><path d="M3.6 4.4H8.8V10.6M8.8 4.4L11 2.6" stroke="#333" stroke-width="0.6" fill="none"/><path d="M13.4 5.8Q16.6 2.8 20.4 5.8Q16.6 8.6 13.4 5.8Z" fill="#fff" stroke="#111" stroke-width="0.7"/><circle cx="16.6" cy="5.6" r="1.5" fill="#1a2a6a"/><path d="M13.2 4.4Q16.6 1.2 20.6 4.4" stroke="#111" stroke-width="1" fill="none"/></svg></div>
<div class="tb bb" style="left:378.5px;top:497.2px;width:27.0px;height:14.5px;"><svg width="25.0" height="12.5" viewBox="0 0 25.0 12.5"><path d="M5.6 7Q12.6 1.4 19.8 7Q12.6 11.4 5.6 7Z" fill="#fff" stroke="#111" stroke-width="0.7"/><circle cx="12.8" cy="6.8" r="2.5" fill="#3a5ab0"/><circle cx="12.8" cy="6.8" r="1.1" fill="#0a0a20"/><path d="M4.8 6Q12.6 -1.8 20.6 6Q12.6 1.8 4.8 6Z" fill="#0a0a0a"/></svg></div>
<div class="tb bb" style="left:407.7px;top:497.2px;width:27.0px;height:14.5px;"><svg width="25.0" height="12.5" viewBox="0 0 25.0 12.5"><rect x="3.6" y="5.6" width="4.6" height="5" fill="#3a8ad0" stroke="#123a6a" stroke-width="0.6"/><rect x="10" y="3" width="3.6" height="5.4" fill="#e8f0f8" stroke="#123a6a" stroke-width="0.6"/><rect x="15" y="3.4" width="4.6" height="5" fill="#3a8ad0" stroke="#123a6a" stroke-width="0.6"/><path d="M6 5Q11 -0.6 17 2.8" stroke="#e03030" stroke-width="0.6" fill="none" stroke-dasharray="1 0.8"/></svg></div>
<div class="tb bb" style="left:437.2px;top:497.2px;width:26.8px;height:14.5px;"><svg width="24.8" height="12.5" viewBox="0 0 24.8 12.5"><path d="M6.6 6.4L11.8 1.8L13.4 5.4L9.4 9.6Z" fill="#fff8c8" stroke="#6a5a20" stroke-width="0.5"/><path d="M9.6 10.2L17.6 2.2L18.8 3.6L11.4 11.2Z" fill="#f0e070" stroke="#5a4a10" stroke-width="0.5"/><path d="M9.6 10.2l-0.8 1.8 2.4-0.8" fill="#333"/></svg></div>
<div class="tb bb" style="left:471.7px;top:497.2px;width:27.1px;height:14.5px;"><svg width="25.1" height="12.5" viewBox="0 0 25.1 12.5"><circle cx="12.4" cy="6" r="4.4" fill="#eef4ff" opacity="0.85"/><g stroke="#9ab8e8" stroke-width="0.7"><path d="M12.4 1.5999999999999996v8.8M8.600000000000001 3.8l7.6 4.4M8.600000000000001 8.2l7.6-4.4"/></g><circle cx="12.4" cy="6" r="1.3" fill="#fff"/></svg></div>
<div class="tb bb" style="left:320.2px;top:514.3px;width:26.6px;height:14.6px;"><svg width="24.6" height="12.6" viewBox="0 0 24.6 12.6"><path d="M5.6 5.2L8 3.4H12.4L13.2 4.4H16.4V10.4H5.6Z" fill="#f4e43c" stroke="#5a4a10" stroke-width="0.6"/><path d="M5.6 10.4V6.4L8.4 5H18L16.4 10.4Z" fill="#fff27a" stroke="#5a4a10" stroke-width="0.5"/></svg></div>
<div class="tb bb" style="left:349.3px;top:514.3px;width:26.9px;height:14.6px;"><svg width="24.9" height="12.6" viewBox="0 0 24.9 12.6"><path d="M7.4 6.6L13.4 4.4L16.4 5.4L10.6 8.4Z" fill="#f8d890" stroke="#5a3a10" stroke-width="0.5"/><path d="M11.6 1.6L13 4.6L11.8 11.2L10.6 5Z" fill="#f07030" stroke="#7a2a10" stroke-width="0.4"/><path d="M6.8 9.4L16.8 3" stroke="#333" stroke-width="0.5"/></svg></div>
<div class="tb bb" style="left:378.5px;top:514.3px;width:27.0px;height:14.6px;"><svg width="25.0" height="12.6" viewBox="0 0 25.0 12.6"><path d="M4.6 4.4Q5.6 10.4 10 8.6Q13.4 6.4 15.6 8.4" stroke="#0e1a6a" stroke-width="0.9" fill="none"/><circle cx="4.6" cy="4.4" r="1" fill="none" stroke="#0e1a6a" stroke-width="0.6"/><path d="M14 8.8Q14.4 5.4 17.4 5.2Q20.4 5.4 20 8.8Z" fill="#dce8f8" stroke="#8aa0c8" stroke-width="0.5"/></svg></div>
<div class="tb bb" style="left:407.7px;top:514.3px;width:27.0px;height:14.6px;"><svg width="25.0" height="12.6" viewBox="0 0 25.0 12.6"><rect x="9.4" y="3.6" width="5.2" height="7.4" rx="0.6" fill="#8a8a90" stroke="#333" stroke-width="0.6"/><rect x="8.8" y="2.4" width="6.4" height="1.4" fill="#b0b0b8" stroke="#333" stroke-width="0.5"/><path d="M10.8 4.8v5M12 4.8v5M13.2 4.8v5" stroke="#d8d8e0" stroke-width="0.5"/></svg></div>
<div class="tb bb" style="left:437.2px;top:514.3px;width:26.8px;height:14.6px;"><svg width="24.8" height="12.6" viewBox="0 0 24.8 12.6"><defs><radialGradient id="bg1" cx="0.4" cy="0.35" r="0.7"><stop offset="0" stop-color="#fff4d8"/><stop offset="0.6" stop-color="#d8b888"/><stop offset="1" stop-color="#7a5a38"/></radialGradient></defs><circle cx="12" cy="6.4" r="4.6" fill="url(#bg1)" stroke="#4a3a28" stroke-width="0.5"/></svg></div>
<div class="tb bb" style="left:471.7px;top:514.3px;width:27.1px;height:14.6px;"><svg width="25.1" height="12.6" viewBox="0 0 25.1 12.6"><circle cx="12" cy="6.4" r="4.4" fill="#eef4ff" opacity="0.85"/><g stroke="#9ab8e8" stroke-width="0.7"><path d="M12 2.0v8.8M8.2 4.2l7.6 4.4M8.2 8.600000000000001l7.6-4.4"/></g><circle cx="12" cy="6.4" r="1.3" fill="#fff"/><path d="M16 3.2Q18.6 3 18.4 6M18.4 6l-1-1.2M18.4 6l1-1" stroke="#e03030" stroke-width="0.7" fill="none"/></svg></div>
<div class="gb e" style="left:506.3px;top:497.4px;width:27.2px;height:14.3px;"></div>
<div class="gb e" style="left:535.5px;top:497.4px;width:27.2px;height:14.3px;"></div>
<div class="gb" style="left:564.7px;top:497.4px;width:27.2px;height:14.3px;"><span>Point</span></div>
<div class="gb" style="left:593.8px;top:497.4px;width:27.2px;height:14.3px;"><span>CtrlP</span></div>
<div class="gb" style="left:623.0px;top:497.4px;width:27.2px;height:14.3px;"><span>Match</span></div>
<div class="gb e" style="left:652.2px;top:497.4px;width:27.2px;height:14.3px;"></div>
<div class="gb e" style="left:681.4px;top:497.4px;width:27.2px;height:14.3px;"></div>
<div class="gb" style="left:710.6px;top:497.4px;width:27.2px;height:14.3px;"><span>Sketch</span></div>
<div class="gb e" style="left:739.7px;top:497.4px;width:27.2px;height:14.3px;"></div>
<div class="gb e" style="left:506.3px;top:514.5px;width:27.2px;height:14.4px;"></div>
<div class="gb e" style="left:535.5px;top:514.5px;width:27.2px;height:14.4px;"></div>
<div class="gb" style="left:564.7px;top:514.5px;width:27.2px;height:14.4px;"><span>Smooth</span></div>
<div class="gb" style="left:593.8px;top:514.5px;width:27.2px;height:14.4px;"><span>Convert</span></div>
<div class="gb" style="left:623.0px;top:514.5px;width:27.2px;height:14.4px;"><span>Invert</span></div>
<div class="gb" style="left:652.2px;top:514.5px;width:27.2px;height:14.4px;"><span>Reduct</span></div>
<div class="gb e" style="left:681.4px;top:514.5px;width:27.2px;height:14.4px;"></div>
<div class="gb" style="left:710.6px;top:514.5px;width:27.2px;height:14.4px;"><span>GTrim</span></div>
<div class="gb" style="left:739.7px;top:514.5px;width:27.2px;height:14.4px;"><span>Select</span></div>
<div class="a" style="left:319.5px;top:531.4px;width:449.5px;height:8.6px;background:#d6d6d6;border-top:1px solid #8a8a8a;border-left:1px solid #8a8a8a;box-sizing:border-box"></div>
<div class="tb kg" style="left:769.9px;top:496.5px;width:14.1px;height:19.9px;"><svg width="12.1" height="17.9" viewBox="0 0 12.1 17.9"><path d="M1.8 9.6Q2.6 4.6 9.4 2.4L10.2 6.4Q6.4 8 6 14.6L4 15.4Z" fill="none" stroke="#1a5a1a" stroke-width="0.7"/><path d="M3.6 10Q5 6.6 9.8 4.6" stroke="#1a5a1a" stroke-width="0.5" fill="none"/><circle cx="7.4" cy="6.2" r="0.5" fill="#1a5a1a"/></svg></div>
<div class="tb kg" style="left:784.3px;top:496.5px;width:14.4px;height:19.9px;"><svg width="12.4" height="17.9" viewBox="0 0 12.4 17.9"><path d="M1.4 2.6L9.8 6L2.2 10.2Q4 6.4 1.4 2.6Z" fill="none" stroke="#1a5a1a" stroke-width="0.7"/></svg></div>
<div class="tb kc" style="left:799.9px;top:496.5px;width:14.7px;height:19.9px;"><svg width="12.7" height="17.9" viewBox="0 0 12.7 17.9"><path d="M2.4 14.6Q3.6 8.4 10.4 4.6" stroke="#1a5a9a" stroke-width="0.8" fill="none"/></svg></div>
<div class="tb kc" style="left:815.2px;top:496.5px;width:14.4px;height:19.9px;"><svg width="12.4" height="17.9" viewBox="0 0 12.4 17.9"><path d="M1.4 4.6L7.6 1.8" stroke="#2a5a8a" stroke-width="0.7" stroke-dasharray="1.6 0.8"/></svg></div>
<div class="tb kp" style="left:830.8px;top:496.5px;width:14.2px;height:19.9px;"><svg width="12.2" height="17.9" viewBox="0 0 12.2 17.9"><path d="M1.8 15Q5 7.4 11 4.4" stroke="#0a0a20" stroke-width="1.4" stroke-dasharray="1.2 1.5" fill="none"/></svg></div>
<div class="tb kp" style="left:846.0px;top:496.5px;width:14.4px;height:19.9px;"><svg width="12.4" height="17.9" viewBox="0 0 12.4 17.9"><path d="M1.4 4.8L9 1.6" stroke="#0a0a20" stroke-width="1.4" stroke-dasharray="1.2 1.4" fill="none"/></svg></div>
<div class="tb kg" style="left:769.9px;top:518.7px;width:14.1px;height:19.8px;"><svg width="12.1" height="17.8" viewBox="0 0 12.1 17.8"><path d="M1.8 9.6Q2.6 4.6 9.4 2.4L10.2 6.4Q6.4 8 6 14.6L4 15.4Z" fill="none" stroke="#1a5a1a" stroke-width="0.7"/><path d="M3.6 10Q5 6.6 9.8 4.6" stroke="#1a5a1a" stroke-width="0.5" fill="none"/><circle cx="7.4" cy="6.2" r="0.5" fill="#1a5a1a"/></svg></div>
<div class="tb kg" style="left:784.3px;top:518.7px;width:14.4px;height:19.8px;"><svg width="12.4" height="17.8" viewBox="0 0 12.4 17.8"><path d="M1.4 2.6L9.8 5.6L2.2 9.6Q4 6 1.4 2.6Z" fill="none" stroke="#1a5a1a" stroke-width="0.7"/><path d="M2.2 12.6L9.6 8.4M2.4 15L8.4 11.4" stroke="#1a5a1a" stroke-width="0.6"/></svg></div>
<div class="tb kc" style="left:799.9px;top:518.7px;width:14.7px;height:19.8px;"><svg width="12.7" height="17.8" viewBox="0 0 12.7 17.8"><path d="M2.4 14.8Q3 8.4 9.8 4.4" stroke="#14407a" stroke-width="0.9" fill="none"/></svg></div>
<div class="tb kc" style="left:815.2px;top:518.7px;width:14.4px;height:19.8px;"><svg width="12.4" height="17.8" viewBox="0 0 12.4 17.8"><path d="M1.4 4.4L7.6 1.8" stroke="#14305a" stroke-width="0.8"/></svg></div>
<div class="tb kp" style="left:830.8px;top:518.7px;width:14.2px;height:19.8px;"><svg width="12.2" height="17.8" viewBox="0 0 12.2 17.8"><rect x="1.6" y="2.2" width="1.3" height="1.3" fill="#0a0a20"/><rect x="4.4" y="3.2" width="1.3" height="1.3" fill="#0a0a20"/><rect x="8.6" y="2.4" width="1.3" height="1.3" fill="#0a0a20"/><rect x="3" y="6" width="1.3" height="1.3" fill="#0a0a20"/><rect x="6.4" y="5.2" width="1.3" height="1.3" fill="#0a0a20"/><rect x="9.6" y="6.4" width="1.3" height="1.3" fill="#0a0a20"/><rect x="2" y="9.4" width="1.3" height="1.3" fill="#0a0a20"/><rect x="5.6" y="8.6" width="1.3" height="1.3" fill="#0a0a20"/><rect x="8.6" y="10" width="1.3" height="1.3" fill="#0a0a20"/><rect x="3.2" y="12.4" width="1.3" height="1.3" fill="#0a0a20"/><rect x="6.6" y="12" width="1.3" height="1.3" fill="#0a0a20"/><rect x="2" y="14.6" width="1.3" height="1.3" fill="#0a0a20"/><rect x="5" y="15" width="1.3" height="1.3" fill="#0a0a20"/></svg></div>
<div class="tb kp" style="left:846.0px;top:518.7px;width:14.4px;height:19.8px;"><svg width="12.4" height="17.8" viewBox="0 0 12.4 17.8"><rect x="0.6" y="2.8" width="1.3" height="1.3" fill="#0a0a20"/><rect x="3" y="2" width="1.3" height="1.3" fill="#0a0a20"/><rect x="5.4" y="3.2" width="1.3" height="1.3" fill="#0a0a20"/><rect x="8" y="1.8" width="1.3" height="1.3" fill="#0a0a20"/><rect x="10.4" y="3" width="1.3" height="1.3" fill="#0a0a20"/><rect x="1.8" y="5.2" width="1.3" height="1.3" fill="#0a0a20"/><rect x="4.4" y="5" width="1.3" height="1.3" fill="#0a0a20"/><rect x="7.2" y="4.6" width="1.3" height="1.3" fill="#0a0a20"/><rect x="9.8" y="5.4" width="1.3" height="1.3" fill="#0a0a20"/></svg></div>
<div id="dlg" style="left:23.2px;top:98.4px;width:176.8px;height:123.4px">
<div class="dt"><svg class="a" style="left:3.4px;top:2.4px" width="8.4" height="8.8" viewBox="0 0 8.4 8.8"><rect x="0.2" y="0.2" width="8" height="8.4" rx="1" fill="#1c3a9a"/><path d="M1.4 7.4C3 6 4 3 7.2 1.4C6.4 3.4 5 5 3 6Z" fill="#fff"/></svg><svg class="a" style="left:0;top:0" width="80" height="14" viewBox="0 0 80 14"><text x="13.8" y="9.9" font-size="6.3" fill="#9898a6" textLength="46" lengthAdjust="spacingAndGlyphs">Background image</text></svg><svg class="a" style="left:166.6px;top:3.8px" width="6" height="6" viewBox="0 0 6 6"><path d="M0.6 0.6l4.8 4.8M5.4 0.6L0.6 5.4" stroke="#a8a8a8" stroke-width="0.7"/></svg></div>
<div class="db " style="left:2.4px;top:19.2px;width:26.2px;height:10px"><span>New</span></div>
<div class="db " style="left:31.0px;top:19.2px;width:26.4px;height:10px"><span>Save</span></div>
<div class="db dis" style="left:59.8px;top:19.2px;width:42.2px;height:10px"><span>Rename</span></div>
<div class="db " style="left:105.4px;top:19.2px;width:28.0px;height:10px"><span>Delete</span></div>
<div class="db dis sel" style="left:136.6px;top:19.2px;width:37.8px;height:10px"><span style="text-align:left;padding-left:0.8px;letter-spacing:-0.3px">SET</span><i></i></div>
<svg class="a" style="left:0;top:35.6px" width="176.8" height="22" viewBox="57.2 134 176.8 22">
<rect x="59.2" y="141" width="7" height="7" fill="#fff"/><path d="M59.2 148V141H66.2" stroke="#6a6a6a" stroke-width="0.9" fill="none"/><path d="M59.6 148H66.2V141.4" stroke="#e8e8e8" stroke-width="0.8" fill="none"/><path d="M60.400000000000006 144.6l1.6 1.8 3-3.8" stroke="#111" stroke-width="1.1" fill="none"/>
<path d="M74.80000000000001 139.2L82.4 137.6V145.4L76.4 149.6Z" fill="#fff"/><path d="M82.4 137.6L88.0 138L87.4 146L82.4 145.4Z" fill="#4c4c4c"/><path d="M82.4 145.4L87.4 146L82.0 152L76.4 149.6Z" fill="#5e5e5e"/><path d="M73.80000000000001 139L83.4 137.2M82.4 136.2V146.4M74.60000000000001 138L76.60000000000001 150.8M75.4 150.2L83.0 145M81.60000000000001 137.4L89.4 138M88.2 136.8L87.2 147.2M81.60000000000001 145.2L88.80000000000001 146.2M75.4 149L83.2 152.8M81.0 153L88.4 145" stroke="#1a1a1a" stroke-width="0.55" fill="none"/>
<rect x="100.8" y="141" width="7" height="7" fill="#fff"/><path d="M100.8 148V141H107.8" stroke="#6a6a6a" stroke-width="0.9" fill="none"/><path d="M101.2 148H107.8V141.4" stroke="#e8e8e8" stroke-width="0.8" fill="none"/><path d="M102.0 144.6l1.6 1.8 3-3.8" stroke="#111" stroke-width="1.1" fill="none"/>
<path d="M116.2 139.2L123.8 137.6V145.4L117.8 149.6Z" fill="#4c4c4c"/><path d="M123.8 137.6L129.4 138L128.8 146L123.8 145.4Z" fill="#5e5e5e"/><path d="M123.8 145.4L128.8 146L123.39999999999999 152L117.8 149.6Z" fill="#fff"/><path d="M115.2 139L124.8 137.2M123.8 136.2V146.4M116.0 138L118.0 150.8M116.8 150.2L124.39999999999999 145M123.0 137.4L130.8 138M129.6 136.8L128.6 147.2M123.0 145.2L130.2 146.2M116.8 149L124.6 152.8M122.39999999999999 153L129.8 145" stroke="#1a1a1a" stroke-width="0.55" fill="none"/>
<rect x="143" y="141" width="7" height="7" fill="#fff"/><path d="M143 148V141H150" stroke="#6a6a6a" stroke-width="0.9" fill="none"/><path d="M143.4 148H150V141.4" stroke="#e8e8e8" stroke-width="0.8" fill="none"/>
<path d="M158.0 139.2L165.6 137.6V145.4L159.6 149.6Z" fill="#4c4c4c"/><path d="M165.6 137.6L171.2 138L170.6 146L165.6 145.4Z" fill="#4c4c4c"/><path d="M166.6 139.6H170.6V144.4H166.6Z" fill="#fff"/><path d="M165.6 145.4L170.6 146L165.2 152L159.6 149.6Z" fill="#5e5e5e"/><path d="M157.0 139L166.6 137.2M165.6 136.2V146.4M157.79999999999998 138L159.79999999999998 150.8M158.6 150.2L166.2 145M164.79999999999998 137.4L172.6 138M171.4 136.8L170.4 147.2M164.79999999999998 145.2L172.0 146.2M158.6 149L166.4 152.8M164.2 153L171.6 145" stroke="#1a1a1a" stroke-width="0.55" fill="none"/>
<rect x="194" y="141" width="7" height="7" fill="#fff"/><path d="M194 148V141H201" stroke="#6a6a6a" stroke-width="0.9" fill="none"/><path d="M194.4 148H201V141.4" stroke="#e8e8e8" stroke-width="0.8" fill="none"/>
<path d="M209.2 139.4L216.2 138V147.4L210.6 151Z" fill="#fff"/><path d="M208.0 139.2L217.2 137.6M216.2 136.4V148.4M208.79999999999998 138.2L210.79999999999998 152.2M209.6 151.6L217.0 147" stroke="#1a1a1a" stroke-width="0.55" fill="none"/>
<path d="M216.2 138.4L222.0 137.2V150.4L216.2 153.6Z" fill="none" stroke="#8a7a50" stroke-width="0.5"/><path d="M217.0 140.4L219.6 139.4V144L217.0 145.4Z" fill="#e8e060"/><path d="M217.2 146.4L223.0 145.4L224.4 147.2L218.6 148Z" fill="#e86a50"/><path d="M215.0 145.6L218.0 144.4L218.79999999999998 147.6L215.6 148.4Z" fill="#2030c8"/>
</svg>
<div class="th " style="left:2.6px;top:64.0px;width:35.0px;height:28.8px"><svg width="33" height="27" viewBox="0 0 33 27"><path d="M6.4 9.4L13 4L20 7.4L26.4 9V19L20 21.6H9L6.4 18.4Z" fill="#f2f2f2"/><path d="M13 4L20 7.4M9 12l8-2 7 3M11 16l10 1M16 6v14M6.4 13l5 1" stroke="#b8b8b8" stroke-width="0.5" fill="none"/><path d="M4 13.4L6.4 11.4V19L4 20.4Z" fill="#e4e4e4"/><ellipse cx="9" cy="16.6" rx="1.7" ry="7" fill="#8a8a8a" stroke="#2a2a2a" stroke-width="0.8"/><ellipse cx="22.4" cy="16" rx="1.7" ry="7" fill="#8a8a8a" stroke="#2a2a2a" stroke-width="0.8"/></svg></div>
<div class="th lt2" style="left:44.0px;top:64.0px;width:35.2px;height:28.8px"><svg width="33" height="27" viewBox="0 0 33 27"><path d="M5.4 8L9 4.4L14 3.4L20 4L26 6.4L29.4 10.4L29 16L26 21.4L20 23.4L12 23L6.4 20L4.6 14Z" fill="#fafafa"/><path d="M9 8Q14 5 20 7.4M8 14Q12 11 17 13.4Q22 16 26 13M10 19Q16 17 22 20M14 4Q12 12 15 22" stroke="#dcdcdc" stroke-width="0.6" fill="none"/></svg></div>
<div class="th em" style="left:86.0px;top:64.0px;width:35.4px;height:28.8px"></div>
<div class="th em" style="left:137.0px;top:64.0px;width:35.6px;height:28.8px"></div>
<svg class="a" style="left:2.0px;top:98.8px" width="8" height="8" viewBox="0 0 8 8"><rect x="0" y="0" width="7.4" height="7.4" fill="#fff"/><path d="M0 7.4V0H7.4" stroke="#6a6a6a" stroke-width="0.9" fill="none"/><path d="M0.4 7.4H7.4V0.4" stroke="#e8e8e8" stroke-width="0.8" fill="none"/></svg>
<svg class="a" style="left:10.8px;top:97.6px" width="34" height="10" viewBox="0 0 34 10"><text x="1" y="7.2" font-family="'Liberation Sans',sans-serif" font-size="6.2" font-weight="bold" fill="#111" textLength="28.4" lengthAdjust="spacingAndGlyphs">Dependent</text></svg>
<div class="a" style="left:0;top:108.2px;width:176.8px;height:1px;background:#8e8e8e"></div><div class="a" style="left:0;top:109.2px;width:176.8px;height:1px;background:#e2e2e2"></div>
<svg class="a" style="left:0;top:110.6px" width="176.8" height="13" viewBox="57.2 209 176.8 13">
<rect x="58.6" y="210.4" width="11" height="9.8" fill="#c8c8c8"/><path d="M58.6 220.20000000000002V210.4H69.6" stroke="#eee" stroke-width="0.8" fill="none"/><path d="M58.6 220.20000000000002H69.6V210.4" stroke="#707070" stroke-width="0.8" fill="none"/>
<path d="M60.8 212.4l6.4 6M67.2 212.4l-6.4 6" stroke="#d81848" stroke-width="1.9"/>
<rect x="78" y="210.4" width="11" height="9.8" fill="#c8c8c8"/><path d="M78 220.20000000000002V210.4H89" stroke="#eee" stroke-width="0.8" fill="none"/><path d="M78 220.20000000000002H89V210.4" stroke="#707070" stroke-width="0.8" fill="none"/>
<circle cx="83.4" cy="212.6" r="0.9" fill="#1a3a8a"/><path d="M83.4 214v4" stroke="#1a3a8a" stroke-width="1.2"/><path d="M80.6 219.4l1.8-1.6h2l1.8 1.6z" fill="#4a6a9a"/>
<rect x="91" y="210.4" width="11" height="9.8" fill="#c8c8c8"/><path d="M91 220.20000000000002V210.4H102" stroke="#eee" stroke-width="0.8" fill="none"/><path d="M91 220.20000000000002H102V210.4" stroke="#707070" stroke-width="0.8" fill="none"/>
<rect x="92.6" y="212" width="7.6" height="6.6" fill="#fff" stroke="#222" stroke-width="0.7"/><path d="M94 215.4h3.4M94 215.4l1.2-1M97.4 215.4v-1.2" stroke="#d02020" stroke-width="0.6" fill="none"/>
<rect x="103.8" y="210.4" width="11" height="9.8" fill="#c8c8c8"/><path d="M103.8 220.20000000000002V210.4H114.8" stroke="#eee" stroke-width="0.8" fill="none"/><path d="M103.8 220.20000000000002H114.8V210.4" stroke="#707070" stroke-width="0.8" fill="none"/>
<rect x="105" y="211.4" width="6.4" height="2.6" fill="#f4f4f4" stroke="#222" stroke-width="0.6"/><rect x="107" y="216" width="6.4" height="3" fill="#f4f4f4" stroke="#222" stroke-width="0.6"/><path d="M112.6 212v2.4" stroke="#d02020" stroke-width="0.8"/><path d="M105 215.4h8" stroke="#3a6ab0" stroke-width="0.7"/>
<rect x="137.8" y="210.4" width="11.2" height="9.8" fill="#bcc4dc"/><path d="M137.8 220.20000000000002V210.4H149.0" stroke="#eee" stroke-width="0.8" fill="none"/><path d="M137.8 220.20000000000002H149.0V210.4" stroke="#707070" stroke-width="0.8" fill="none"/>
<path d="M146 212.4v6l-5.4-3z" fill="#8aa0d0" stroke="#2a3a7a" stroke-width="0.7"/>
<rect x="155.6" y="210.4" width="11" height="9.8" fill="#c6c6c6"/><path d="M155.6 220.20000000000002V210.4H166.6" stroke="#eee" stroke-width="0.8" fill="none"/><path d="M155.6 220.20000000000002H166.6V210.4" stroke="#a0a0a0" stroke-width="0.8" fill="none"/>
<path d="M159 212.6v5.6l5-2.8z" fill="#c0c0c8" stroke="#a8a8b0" stroke-width="0.6"/>
</svg>
</div>
</div>
</body></html>
